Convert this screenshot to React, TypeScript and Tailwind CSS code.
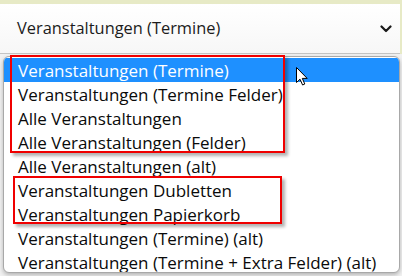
import React from 'react';

const options = [
  'Veranstaltungen (Termine)',
  'Veranstaltungen (Termine Felder)',
  'Alle Veranstaltungen',
  'Alle Veranstaltungen (Felder)',
  'Alle Veranstaltungen (alt)',
  'Veranstaltungen Dubletten',
  'Veranstaltungen Papierkorb',
  'Veranstaltungen (Termine) (alt)',
  'Veranstaltungen (Termine + Extra Felder) (alt)',
];

const Chevron = () => (
  <svg width="12" height="8" viewBox="0 0 12 8" className="text-[#1a1a1a]">
    <path d="M1.5 1.5 L6 6 L10.5 1.5" fill="none" stroke="currentColor" strokeWidth="2.2" strokeLinecap="round" strokeLinejoin="round" />
  </svg>
);

const Cursor = () => (
  <svg width="13" height="19" viewBox="0 0 13 19">
    <path
      d="M0.5 0.5 L0.5 15.5 L4 12.2 L6.6 18 L8.8 17 L6.3 11.4 L11.2 11.4 Z"
      fill="#fff"
      stroke="#000"
      strokeWidth="1"
      strokeLinejoin="round"
    />
  </svg>
);

export default function App() {
  return (
    <div
      className="relative w-[402px] h-[276px] overflow-hidden bg-[#f1f1f1]"
      style={{ fontFamily: '"Open Sans", "Noto Sans", sans-serif' }}
    >
      {/* focused select */}
      <div className="bg-[#e7eac6] pt-[4px] pr-[2px]">
        <div className="h-[50px] flex items-center justify-between pl-[17px] pr-[8px] bg-gradient-to-b from-white to-[#f7f7f7] border-b border-[#c4c4c4]">
          <span className="text-[16.4px] text-[#1c1c1c] leading-none">Veranstaltungen (Termine)</span>
          <Chevron />
        </div>
      </div>

      {/* open option list */}
      <div className="ml-[3px] mt-[2px] w-[397px] h-[217px] pt-[1px] bg-white border border-[#a8a8a8] rounded-[6px] shadow-[0_2px_4px_rgba(0,0,0,0.25)] overflow-hidden">
        {options.map((opt, i) => (
          <div
            key={opt}
            className={`h-[24px] flex items-center pl-[14px] text-[17px] leading-none ${
              i === 0 ? 'bg-[#1e90ff] text-white' : 'text-[#0a0a0a]'
            }`}
          >
            {opt}
          </div>
        ))}
      </div>

      {/* annotation boxes */}
      <div className="absolute left-[10px] top-[55px] w-[275px] h-[98px] border-2 border-[#f00000] shadow-[3px_3px_3px_rgba(0,0,0,0.3)]" />
      <div className="absolute left-[13px] top-[176px] w-[269px] h-[48px] border-2 border-[#f00000] shadow-[3px_3px_3px_rgba(0,0,0,0.3)]" />

      <div className="absolute left-[296px] top-[67px]">
        <Cursor />
      </div>
    </div>
  );
}
